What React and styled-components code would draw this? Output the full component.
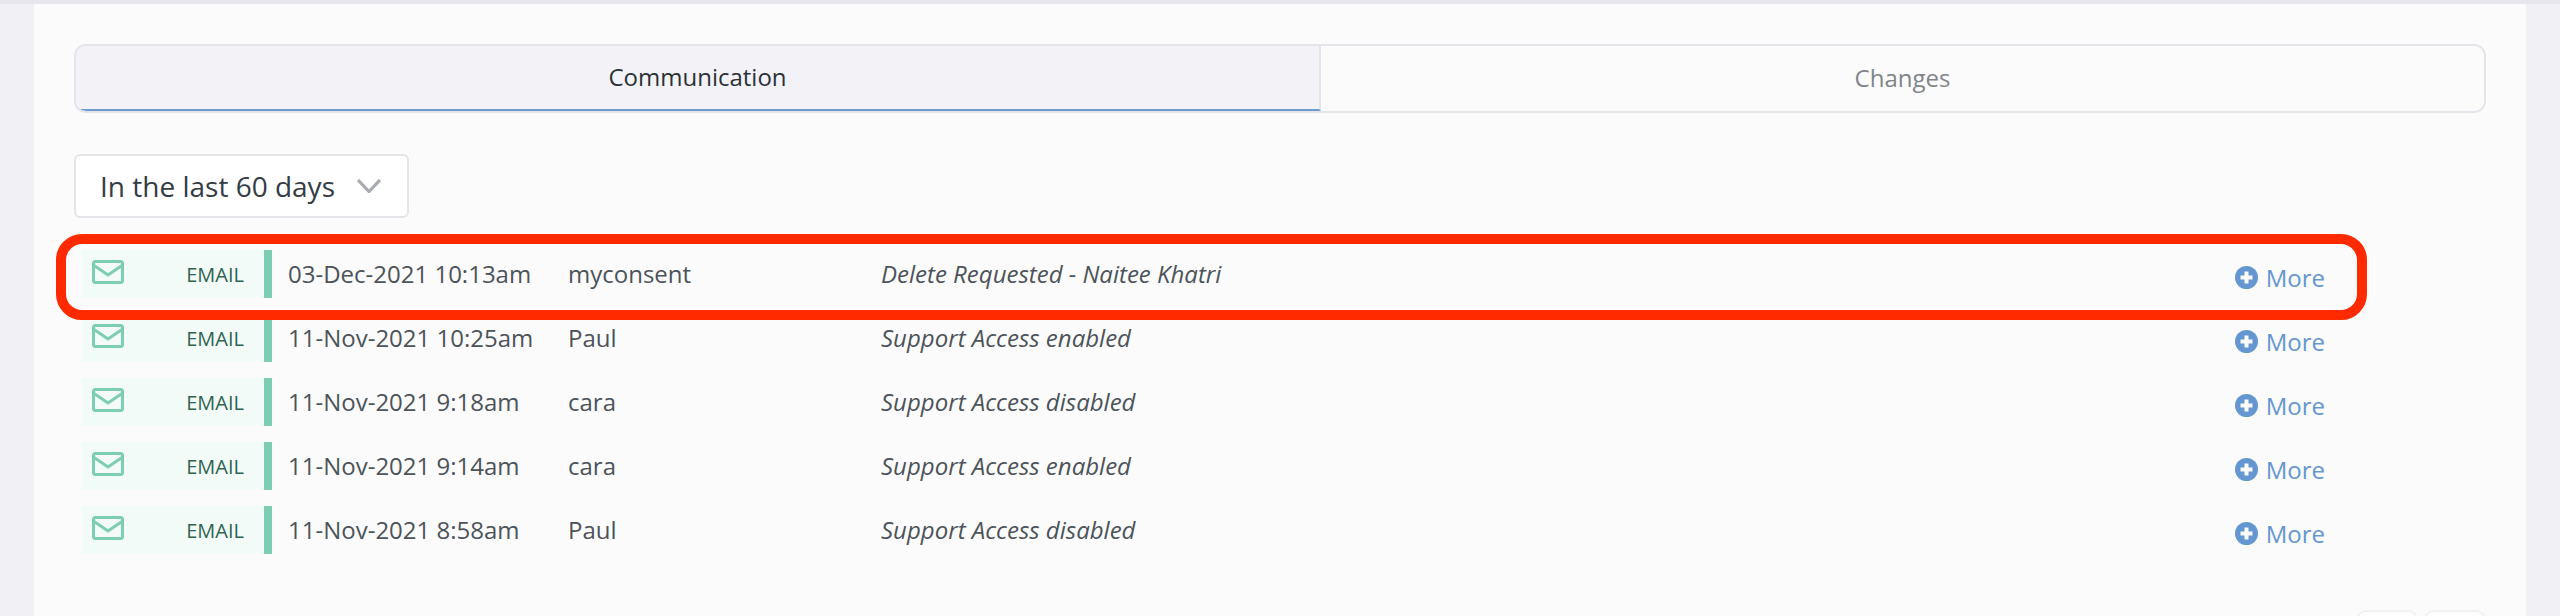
import React from "react";
import styled, { createGlobalStyle } from "styled-components";

const Global = createGlobalStyle`
  html, body { margin: 0; padding: 0; background: #f1f1f5; height: 616px; overflow: hidden; }
  body { font-family: "Open Sans", "Noto Sans", sans-serif; }
`;

const Page = styled.div`
  width: 2560px;
  height: 616px;
  overflow: hidden;
  padding: 4px 34px 0;
  box-sizing: border-box;
  position: relative;
  background: #f1f1f5;
`;
const TopEdge = styled.div`
  position: absolute;
  left: 0;
  right: 0;
  top: 0;
  height: 4px;
  background: #e6e6ec;
`;
const Panel = styled.main`
  background: #fbfbfb;
  height: 612px;
  padding: 40px 40px 0;
  box-sizing: border-box;
  display: flex;
  flex-direction: column;
`;
const Tabs = styled.div`
  display: flex;
  height: 69px;
  box-sizing: border-box;
  border: 2px solid #e4e4ea;
  border-radius: 12px;
  overflow: hidden;
`;
const Tab = styled.div`
  flex: ${p => (p.$active ? "0 0 1245px" : "1 1 auto")};
  display: flex;
  align-items: center;
  justify-content: center;
  box-sizing: border-box;
  font-size: 24px;
  padding-bottom: 2px;
  color: ${p => (p.$active ? "#2b3238" : "#80858a")};
  background: ${p => (p.$active ? "#f2f2f7" : "#fbfbfb")};
  border-bottom: ${p => (p.$active ? "2px solid #6c9bd2" : "0")};
  border-right: ${p => (p.$active ? "2px solid #e4e4ea" : "0")};
`;
const Select = styled.div`
  margin-top: 41px;
  width: 335px;
  height: 64px;
  box-sizing: border-box;
  border: 2px solid #e4e4ea;
  border-radius: 6px;
  background: #fff;
  display: flex;
  align-items: center;
  padding-left: 24px;
  gap: 22px;
  font-size: 28px;
  color: #343c44;
`;
const List = styled.div`
  margin-top: 32px;
  display: flex;
  flex-direction: column;
  gap: 16px;
  padding-left: 8px;
`;
const Row = styled.div`
  display: flex;
  height: 48px;
  align-items: stretch;
  color: #4c535a;
  font-size: 24px;
`;
const Kind = styled.div`
  flex: 0 0 190px;
  box-sizing: border-box;
  background: #f3fbf8;
  border-right: 8px solid #7dcdb5;
  display: flex;
  justify-content: space-between;
  padding: 10px 20px 0 10px;
`;
const Label = styled.span`
  font-size: 20px;
  line-height: 30px;
  color: #2d6350;
`;
const DateCell = styled.div`
  flex: 0 0 296px;
  padding-left: 16px;
  box-sizing: border-box;
  line-height: 48px;
`;
const User = styled.div`
  flex: 0 0 313px;
  line-height: 48px;
`;
const Subject = styled.div`
  flex: 1;
  font-style: italic;
  line-height: 48px;
`;
const More = styled.a`
  display: flex;
  align-items: center;
  gap: 8px;
  margin-right: 161px;
  padding-top: 6px;
  height: 48px;
  box-sizing: border-box;
  font-size: 24px;
  color: #6496d0;
`;
const Pager = styled.div`
  position: absolute;
  right: 74px;
  top: 610px;
  display: flex;
  gap: 6px;
`;
const PageButton = styled.div`
  width: 62px;
  height: 30px;
  box-sizing: border-box;
  border: 2px solid #f1f1f4;
  border-radius: 10px;
  background: #fdfdfd;
`;
const Box = styled.div`
  position: absolute;
  left: 56px;
  top: 234px;
  width: 2311px;
  height: 86px;
  box-sizing: border-box;
  border: 10px solid #ff2a00;
  border-radius: 26px;
`;

const Envelope = () => (
  <svg width="32" height="24" viewBox="0 0 32 24" fill="none" stroke="#7dcdb5" strokeWidth="3">
    <rect x="1.5" y="1.5" width="29" height="21" rx="2" />
    <path d="M2 5.5 L16 15 L30 5.5" />
  </svg>
);
const Plus = () => (
  <svg width="23" height="23" viewBox="0 0 23 23">
    <circle cx="11.5" cy="11.5" r="11.5" fill="#6496d0" />
    <path d="M11.5 5.5v12M5.5 11.5h12" stroke="#fbfbfb" strokeWidth="4" />
  </svg>
);
const Chevron = () => (
  <svg width="24" height="14" viewBox="0 0 24 14" fill="none" stroke="#a8abb0" strokeWidth="3.2">
    <path d="M1 1 L12 12.5 L23 1" />
  </svg>
);

const rows = [
  ["03-Dec-2021 10:13am", "myconsent", "Delete Requested - Naitee Khatri"],
  ["11-Nov-2021 10:25am", "Paul", "Support Access enabled"],
  ["11-Nov-2021 9:18am", "cara", "Support Access disabled"],
  ["11-Nov-2021 9:14am", "cara", "Support Access enabled"],
  ["11-Nov-2021 8:58am", "Paul", "Support Access disabled"],
];

export default function App() {
  return (
    <Page>
      <Global />
      <TopEdge />
      <Panel>
        <Tabs>
          <Tab $active>Communication</Tab>
          <Tab>Changes</Tab>
        </Tabs>
        <Select>
          In the last 60 days
          <Chevron />
        </Select>
        <List>
          {rows.map(([d, u, s]) => (
            <Row key={d}>
              <Kind>
                <Envelope />
                <Label>EMAIL</Label>
              </Kind>
              <DateCell>{d}</DateCell>
              <User>{u}</User>
              <Subject>{s}</Subject>
              <More>
                <Plus />
                More
              </More>
            </Row>
          ))}
        </List>
      </Panel>
      <Pager>
        <PageButton />
        <PageButton />
      </Pager>
      <Box />
    </Page>
  );
}
